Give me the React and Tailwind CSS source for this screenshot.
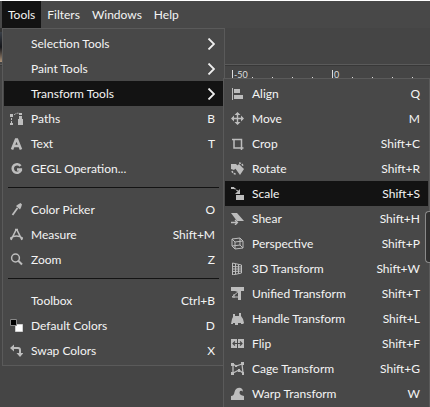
const stroke = { fill: "none", stroke: "currentColor" };

const icons = {
  paths: (
    <>
      <path {...stroke} strokeDasharray="2 1" d="M1.500 3V12M4 3Q7 0 11 2" />
      <path d="M0 2h3v3H0zM0 11h3v2H0zM9 1h3v2H9zM9 4h3v3H9zM8 7h5v6H8z" />
    </>
  ),
  text: <path {...stroke} strokeWidth="2.6" d="M2 12.5L6 2.5h1L11 12.5M3.500 9h6" />,
  gegl: <path {...stroke} strokeWidth="2.6" d="M10.500 4A4.300 4.300 0 1 0 10.800 8.500V7.500H7" />,
  picker: (
    <>
      <path {...stroke} strokeWidth="1.800" d="M2.500 12L7.500 5" />
      <path d="M6 3l4 3.500 1-2 1-3L10.500 0 8 1.500z" />
    </>
  ),
  measure: <path {...stroke} strokeWidth="1.600" d="M1 12L6 2h1L12 12M0 10.500Q6.500 5.500 13 10.500M5 1.500h3" />,
  zoom: (
    <>
      <circle {...stroke} strokeWidth="1.500" cx="5.500" cy="5" r="3.900" />
      <path {...stroke} strokeWidth="2" d="M8 7.500l4 4" />
    </>
  ),
  defaults: (
    <>
      <path fill="#fff" stroke="#d0d0d0" d="M5.500 5.500h7v7h-7z" />
      <path fill="#000" stroke="#888" d="M.5 .5h6v6h-6z" />
    </>
  ),
  swap: (
    <>
      <path {...stroke} strokeWidth="2" d="M3 4h5q2 0 2 2v4" />
      <path d="M0 4l4-3.500v7zM6.500 9h7L10 13z" />
    </>
  ),
  align: <path d="M1 1h1v12H1zM3 2h6v4H3zM3 8h9v4H3z" />,
  move: (
    <>
      <path {...stroke} strokeWidth="1.400" d="M6.500 1v11M1 6.500h11" />
      <path d="M6.500 0l3 3h-6zM6.500 13l-3-3h6zM0 6.500l3-3v6zM13 6.500l-3-3v6z" />
    </>
  ),
  crop: <path {...stroke} strokeWidth="1.500" d="M3 2v9h9.500M1 2.500h9.500V13" />,
  rotate: (
    <>
      <path d="M4 6l4-4 5 5-4 6zM0 2h5l2 2-4 4-3-1z" />
      <path {...stroke} strokeWidth="1.500" strokeDasharray="2 1" d="M8 1q3 0 4 3M1 9q1 3 4 3" />
    </>
  ),
  scale: (
    <>
      <path d="M0 0h3v2H0zM5 8h8v5H5z" />
      <path {...stroke} strokeWidth="1.200" strokeDasharray="2 1" d="M3 1l5 4" />
      <path d="M9 2v5H4z" />
    </>
  ),
  shear: (
    <>
      <path d="M0 1h6l7 8H6z" />
      <path {...stroke} strokeWidth="1.300" d="M0 10.500h6M4 8l2.500 2.500L4 13" />
    </>
  ),
  perspective: <path {...stroke} d="M1 2l8-1 3 3v7l-8 1-3-3zM1 2l3 3 8-1M4 5v7M9 1v7l3 3M1 9l8-1" />,
  threeD: <path {...stroke} d="M1.500 1l9 2v8l-9 2zM4.500 2v10M7.500 2.500v9M1.500 4.500l9 .5M1.500 7h9M1.500 9.500l9-.5" />,
  unified: (
    <>
      <path d="M0 0h13v4h-3v9H7V5L4 4H0z" />
      <path {...stroke} d="M8 4L1 10h6M3 7v4" />
    </>
  ),
  handle: <path d="M2 2h2v2h4V1h2v3l2 3 1 4-1 1h-2v-1H7v2H4v-2H2v1H0l1-5 1-2z" />,
  flip: (
    <>
      <path d="M0 2h6v9H0zM7 2h6v9H7z" />
      <path fill="none" stroke="#484848" strokeWidth="1.200" d="M2 6.500h9M4 4.500l-2 2 2 2M9 4.500l2 2-2 2" />
    </>
  ),
  cage: (
    <>
      <path {...stroke} strokeWidth="1.300" d="M2 2l3 2 6-2 1 9-4-3-6 3z" />
      <path d="M0 1h3v3H0zM10 0h3v3h-3zM11 10h2v3h-2zM0 10h3v3H0zM7 7h2v3H7zM4 3h2v2H4z" />
    </>
  ),
  warp: <path d="M0 13V9q3 0 3.500-4Q5 0 10 1q2 1 2 4-1-2-3-1-2 4 4 5v4z" />,
};

const toolsMenu = [
  [
    { label: "Selection Tools", sub: true },
    { label: "Paint Tools", sub: true },
    { label: "Transform Tools", sub: true, active: true },
    { label: "Paths", keys: "B", icon: "paths" },
    { label: "Text", keys: "T", icon: "text" },
    { label: "GEGL Operation...", icon: "gegl" },
  ],
  [
    { label: "Color Picker", keys: "O", icon: "picker" },
    { label: "Measure", keys: "Shift+M", icon: "measure" },
    { label: "Zoom", keys: "Z", icon: "zoom" },
  ],
  [
    { label: "Toolbox", keys: "Ctrl+B" },
    { label: "Default Colors", keys: "D", icon: "defaults" },
    { label: "Swap Colors", keys: "X", icon: "swap" },
  ],
];

const transformMenu = [
  { label: "Align", keys: "Q", icon: "align" },
  { label: "Move", keys: "M", icon: "move" },
  { label: "Crop", keys: "Shift+C", icon: "crop" },
  { label: "Rotate", keys: "Shift+R", icon: "rotate" },
  { label: "Scale", keys: "Shift+S", icon: "scale", active: true },
  { label: "Shear", keys: "Shift+H", icon: "shear" },
  { label: "Perspective", keys: "Shift+P", icon: "perspective" },
  { label: "3D Transform", keys: "Shift+W", icon: "threeD" },
  { label: "Unified Transform", keys: "Shift+T", icon: "unified" },
  { label: "Handle Transform", keys: "Shift+L", icon: "handle" },
  { label: "Flip", keys: "Shift+F", icon: "flip" },
  { label: "Cage Transform", keys: "Shift+G", icon: "cage" },
  { label: "Warp Transform", keys: "W", icon: "warp" },
];

function MenuItem({ item }) {
  return (
    <button
      type="button"
      role="menuitem"
      className={`flex h-[25px] w-full items-center pl-1.5 pr-2 text-left whitespace-nowrap ${item.active ? "bg-[#131313]" : ""}`}
    >
      <span className="w-[21px] shrink-0">
        {item.icon && (
          <svg width="13" height="13" viewBox="0 0 13 13" fill="currentColor" className="text-[#bdbdbd]" aria-hidden="true">
            {icons[item.icon]}
          </svg>
        )}
      </span>
      <span className="grow">{item.label}</span>
      {item.keys && <span>{item.keys}</span>}
      {item.sub && (
        <svg width="8" height="12" viewBox="0 0 8 12" fill="none" stroke="#eee" strokeWidth="1.800" aria-hidden="true">
          <path d="M1.500 .5L7 6l-5.500 5.500" />
        </svg>
      )}
    </button>
  );
}

function Ruler() {
  return (
    <div className="flex h-3 items-end pl-[232px] text-[9px] leading-[9px] text-[#ddd]">
      {["-50", "0"].map((mark) => (
        <div key={mark} className="flex w-[100px] shrink-0 items-end">
          <span className="h-2 w-5 shrink-0 border-l border-[#ddd] pl-px">{mark}</span>
          {[1, 2, 3, 4].map((n) => (
            <span key={n} className="w-5 shrink-0">
              <span className="block h-px w-px bg-[#ddd]" />
            </span>
          ))}
        </div>
      ))}
    </div>
  );
}

export default function App() {
  return (
    <div className="relative h-screen overflow-hidden border-t border-white bg-[#454545] font-[Lato,'Open_Sans',sans-serif] text-[12px] leading-4 text-[#f4f4f4]">
      <nav role="menubar" className="flex h-[27px] bg-[#484848] pl-0.5">
        {["Tools", "Filters", "Windows", "Help"].map((name) => (
          <button key={name} type="button" role="menuitem" className={`px-1.5 ${name === "Tools" ? "bg-[#131313]" : ""}`}>
            {name}
          </button>
        ))}
      </nav>
      <main>
        <div className="h-[37px] border-b border-[#5a5a5a]">
          <div className="flex h-[34px] w-0.5 flex-col">
            <div className="h-1 bg-[#333]" />
            <div className="grow bg-linear-to-b from-[#3a4048] via-[#15161a] to-[#b0957a]" />
          </div>
        </div>
        <div className="border-t border-[#383838]">
          <Ruler />
        </div>
      </main>

      <div role="menu" aria-label="Tools" className="absolute top-[27px] left-0.5 w-[223px] border border-[#5a5a5a] bg-[#484848] px-px py-0.5">
        {toolsMenu.map((group, index) => (
          <div key={group[0].label}>
            {index > 0 && <hr className="mx-1 mt-1.5 mb-[9px] border-t border-[#131313]" />}
            {group.map((item) => (
              <MenuItem key={item.label} item={item} />
            ))}
          </div>
        ))}
      </div>

      <div role="menu" aria-label="Transform Tools" className="absolute top-[77px] right-0 w-[207px] border border-b-0 border-[#5a5a5a] bg-[#484848] px-px py-0.5">
        {transformMenu.map((item) => (
          <MenuItem key={item.label} item={item} />
        ))}
      </div>

      <div className="absolute top-[210px] right-0 h-[52px] w-[5px] rounded-l-sm border border-r-0 border-[#8a8a8a] bg-[#303030]" />
    </div>
  );
}
